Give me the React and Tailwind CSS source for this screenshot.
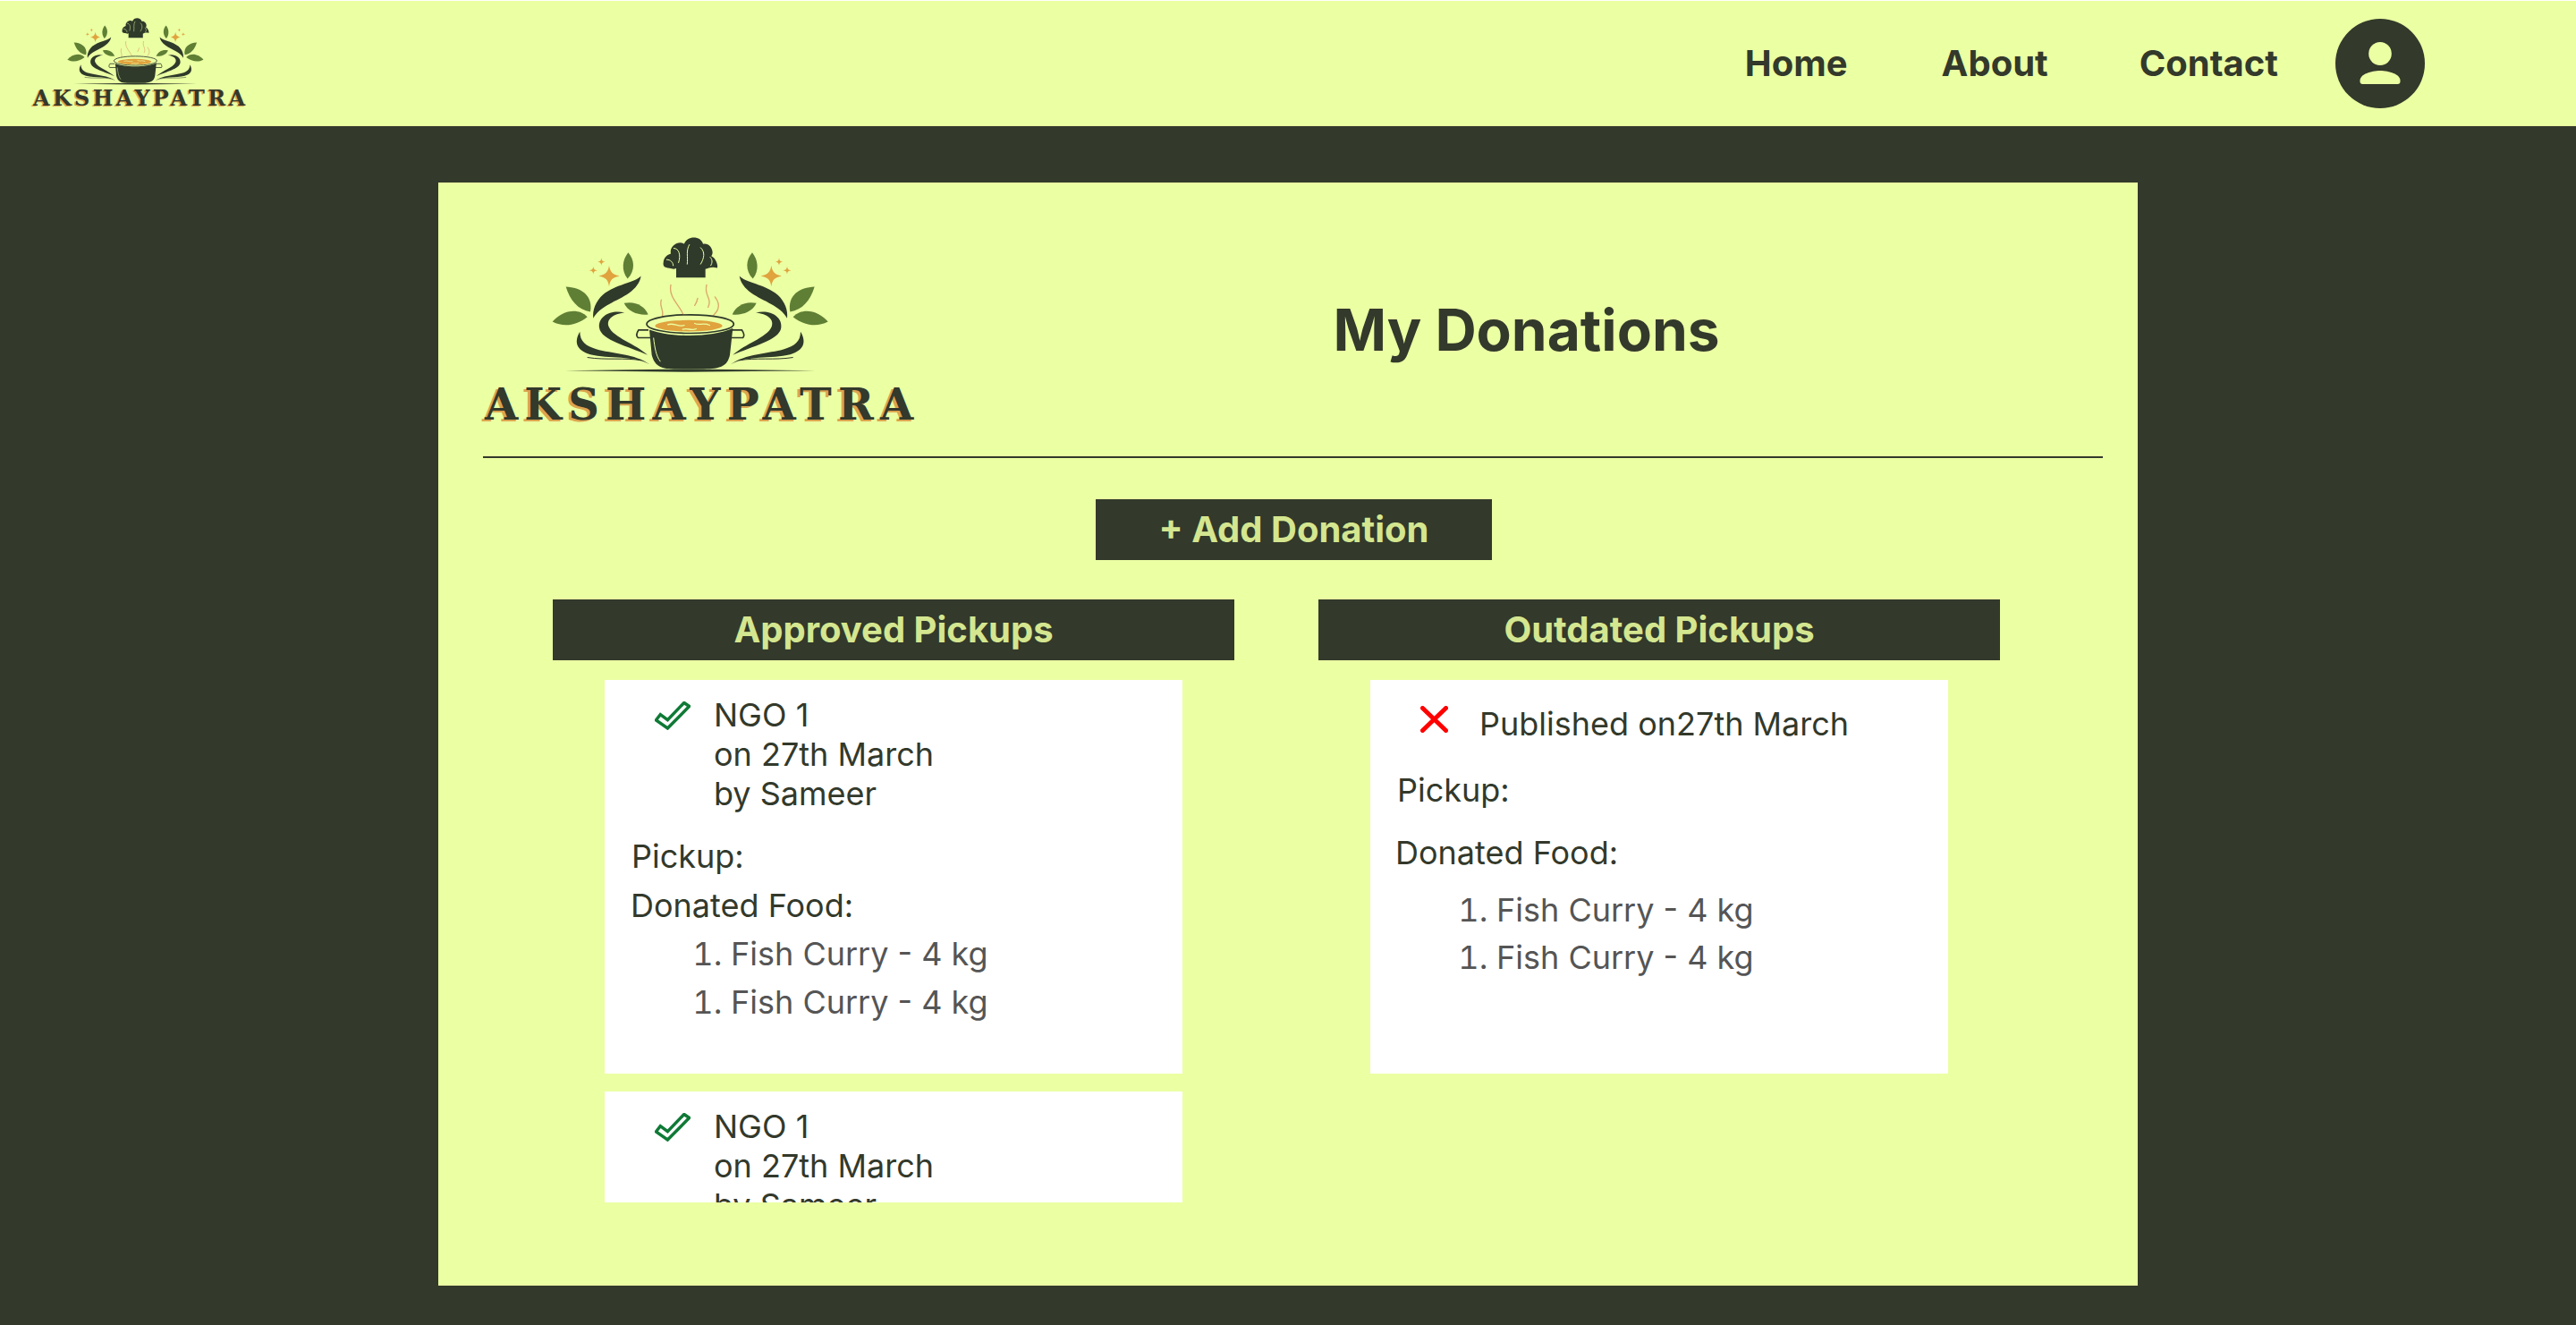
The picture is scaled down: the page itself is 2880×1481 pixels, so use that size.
import React from "react";

const DARK = "#2f3a2a";
const GREEN = "#5f7f35";
const GOLD = "#e0a33e";
const LIGHT = "#ebffa3";

function Half() {
  return (
    <g>
      <path fill={GOLD} d="M483 170 C487 193 494 200 518 205 C494 210 487 217 483 240 C479 217 472 210 448 205 C472 200 479 193 483 170Z" />
      <path fill={GOLD} d="M457 144 C458 153 461 156 470 157 C461 158 458 161 457 170 C456 161 453 158 444 157 C453 156 456 153 457 144Z" />
      <path fill={GOLD} d="M430 172 C431 182 434 185 444 186 C434 187 431 190 430 200 C429 190 426 187 416 186 C426 185 429 182 430 172Z" />
      <path fill={GREEN} d="M547 126 C568 150 572 185 545 214 C522 185 528 150 547 126Z" />
      <path fill={GREEN} d="M338 241 C388 243 430 270 420 325 C378 318 352 287 338 241Z" />
      <path fill={GREEN} d="M293 358 C323 322 378 308 410 342 C372 372 330 377 293 358Z" />
      <path fill={GREEN} d="M533 296 C570 288 602 305 614 334 C580 337 548 327 533 296Z" />
      <path fill={DARK} d="M590 205 C570 228 505 232 462 268 C438 290 426 320 430 347 C452 305 510 290 550 262 C572 246 586 228 590 205Z" />
      <path fill={DARK} d="M535 328 C490 316 445 340 450 378 C456 422 550 440 612 470 C572 432 498 412 482 375 C472 350 497 332 535 328Z" />
      <path fill={DARK} d="M385 392 C365 425 372 455 420 468 C480 483 570 470 620 502 C572 465 490 465 440 450 C405 440 385 425 385 392Z" />
      <path fill="none" stroke={DARK} strokeWidth="3" d="M410 478 C470 488 540 478 590 488" />
    </g>
  );
}

function LogoArt({ className }) {
  return (
    <svg viewBox="60 75 1440 455" className={className}>
      <Half />
      <g transform="translate(1510 0) scale(-1 1)">
        <Half />
      </g>
      <path fill={DARK} d="M708 168 H806 V210 H708Z" />
      <path fill={DARK} d="M700 182 C678 176 662 180 665 160 C666 145 675 135 690 130 C684 105 715 85 735 97 C745 68 792 70 798 98 C820 92 838 122 826 138 C842 145 850 172 845 178 C830 172 815 178 806 182 C780 170 730 170 700 182Z" />
      <g fill="none" stroke={LIGHT} strokeWidth="3" strokeLinecap="round">
        <path d="M700 112 C718 112 724 135 716 160" />
        <path d="M752 100 C740 120 748 140 745 165" />
        <path d="M790 110 C806 125 802 145 790 165" />
        <path d="M822 142 C830 150 830 160 824 170" />
        <path d="M676 150 C690 150 698 160 698 170" />
      </g>
      <g fill="none" stroke="#dba76a" strokeWidth="4" strokeLinecap="round">
        <path d="M690 235 C680 280 730 310 735 345" />
        <path d="M658 285 C650 310 670 320 660 345" />
        <path d="M810 235 C800 270 830 280 815 310" />
        <path d="M838 275 C865 310 840 330 825 345" />
        <path d="M780 280 C778 290 774 298 770 304" />
      </g>
      <path fill="none" stroke={DARK} strokeWidth="5" d="M615 386 H582 C574 398 574 408 580 412 H625" />
      <path fill="none" stroke={DARK} strokeWidth="5" d="M895 386 H928 C936 398 936 408 932 412 H885" />
      <path fill={DARK} d="M618 385 C690 412 830 412 898 380 L888 470 C880 506 860 517 800 517 H700 C650 517 635 502 626 470Z" />
      <path fill="none" stroke={LIGHT} strokeWidth="3" d="M632 412 C636 445 640 472 655 492" />
      <ellipse cx="755" cy="366" rx="146" ry="31" fill={LIGHT} stroke={DARK} strokeWidth="5" />
      <ellipse cx="750" cy="372" rx="113" ry="19" fill={GOLD} />
      <g fill="none" stroke={LIGHT} strokeWidth="4" strokeLinecap="round">
        <path d="M680 368 C700 360 715 378 735 370" />
        <path d="M770 364 C785 372 800 360 820 370" />
        <path d="M730 384 C745 378 760 390 775 382" />
      </g>
      <path fill={DARK} d="M335 522 L755 517 L1175 522 L755 527Z" />
    </svg>
  );
}

function Check() {
  return (
    <svg viewBox="0 0 40 32" className="w-[40px] h-[32px] shrink-0">
      <path d="M32.8 1.5 L38.6 5.5 L14.4 30 L1.5 20.8 L6.3 14.6 L14.4 20.6 Z" fill="none" stroke="#0f7a36" strokeWidth="3.5" />
    </svg>
  );
}

function Cross() {
  return (
    <svg viewBox="0 0 31 30" className="w-[31px] h-[30px] shrink-0">
      <path d="M2.5 2.5 L28.5 27.5 M28.5 2.5 L2.5 27.5" stroke="#ff0000" strokeWidth="5" strokeLinecap="round" fill="none" />
    </svg>
  );
}

function Food({ className }) {
  return (
    <ol className={`list-decimal pl-[141px] text-[#555555] ${className}`}>
      <li>Fish Curry - 4 kg</li>
    </ol>
  );
}

function ApprovedCard() {
  return (
    <div className="mx-[58px] mb-[20px] h-[440px] shrink-0 bg-white pt-[17px] text-[36px] leading-[44px] text-[#33392b]">
      <div className="flex pl-[56px]">
        <div className="mt-[7px] mr-[26px]"><Check /></div>
        <div>
          <div>NGO 1</div>
          <div>on 27th March</div>
          <div>by Sameer</div>
        </div>
      </div>
      <div className="mt-[26px] pl-[30px]">Pickup:</div>
      <div className="mt-[11px] pl-[29px]">Donated Food:</div>
      <Food className="mt-[10px]" />
      <Food className="mt-[10px]" />
    </div>
  );
}

function OutdatedCard() {
  return (
    <div className="mx-[58px] h-[440px] shrink-0 bg-white pt-[27px] text-[36px] leading-[44px] text-[#33392b]">
      <div className="flex items-center pl-[56px]">
        <div className="mr-[35px] -mt-[10px]"><Cross /></div>
        <div>Published on27th March</div>
      </div>
      <div className="mt-[30px] pl-[30px]">Pickup:</div>
      <div className="mt-[26px] pl-[28px]">Donated Food:</div>
      <Food className="mt-[20px]" />
      <Food className="mt-[9px]" />
    </div>
  );
}

function Column({ title, children }) {
  return (
    <div className="w-[762px] flex flex-col">
      <div className="h-[68px] flex items-center justify-center bg-[#33392b] text-[#d4e68f] text-[40px] font-bold">{title}</div>
      <div className="mt-[22px] h-[584px] overflow-hidden flex flex-col">{children}</div>
    </div>
  );
}

export default function App() {
  return (
    <div className="h-[1481px] flex flex-col bg-white pt-px font-['Inter',sans-serif]">
      <nav className="h-[140px] shrink-0 flex items-center bg-[#ebffa3] pl-[37px] pr-[169px] text-[#33392b]">
        <div className="flex flex-col items-start w-[237px]">
          <LogoArt className="w-[237px] h-[75px]" />
          <div className="mt-[2px] text-[24px] leading-[26px] font-bold tracking-[3.3px] whitespace-nowrap font-['DejaVu_Serif',serif] [text-shadow:-1.5px_1px_0_#dca44f]">AKSHAYPATRA</div>
        </div>
        <div className="ml-auto flex items-center text-[40px] font-bold">
          <a className="mr-[105px]">Home</a>
          <a className="mr-[102px]">About</a>
          <a className="mr-[64px]">Contact</a>
          <div className="w-[100px] h-[100px] rounded-full bg-[#33392b] flex items-center justify-center">
            <svg viewBox="0 0 100 100" className="w-[100px] h-[100px]">
              <ellipse cx="50" cy="39" rx="12.8" ry="13" fill="#ebffa3" />
              <path fill="#ebffa3" d="M27.5 69 C27.5 62 40 58 50 58 C60 58 72.5 62 72.5 69 V70 a3 3 0 0 1 -3 3 H30.5 a3 3 0 0 1 -3 -3 Z" />
            </svg>
          </div>
        </div>
      </nav>
      <main className="flex-1 bg-[#33392b] flex justify-center pt-[63px]">
        <div className="w-[1900px] h-[1233px] bg-[#ebffa3] flex flex-col">
          <div className="h-[306px] shrink-0 flex pl-[50px] pt-[61px] text-[#33392b]">
            <div className="w-[480px] flex flex-col items-start">
              <LogoArt className="w-[480px] h-[152px]" />
              <div className="mt-[9px] ml-[2px] text-[48px] leading-[53px] font-bold tracking-[7.1px] whitespace-nowrap font-['DejaVu_Serif',serif] [text-shadow:-3px_2px_0_#dca44f]">AKSHAYPATRA</div>
            </div>
            <h1 className="flex-1 pl-[42px] pr-[39px] text-center text-[64px] leading-[80px] font-bold mt-[64px] h-[80px]">My Donations</h1>
          </div>
          <div className="ml-[50px] mr-[39px] h-[2px] shrink-0 bg-[#33392b]" />
          <div className="mt-[46px] pl-[13px] flex justify-center">
            <button className="w-[443px] h-[68px] bg-[#33392b] text-[#d4e68f] text-[40px] font-bold">+ Add Donation</button>
          </div>
          <div className="mt-[44px] pl-[128px] flex gap-[94px]">
            <Column title="Approved Pickups">
              <ApprovedCard />
              <ApprovedCard />
            </Column>
            <Column title="Outdated Pickups">
              <OutdatedCard />
            </Column>
          </div>
        </div>
      </main>
    </div>
  );
}
